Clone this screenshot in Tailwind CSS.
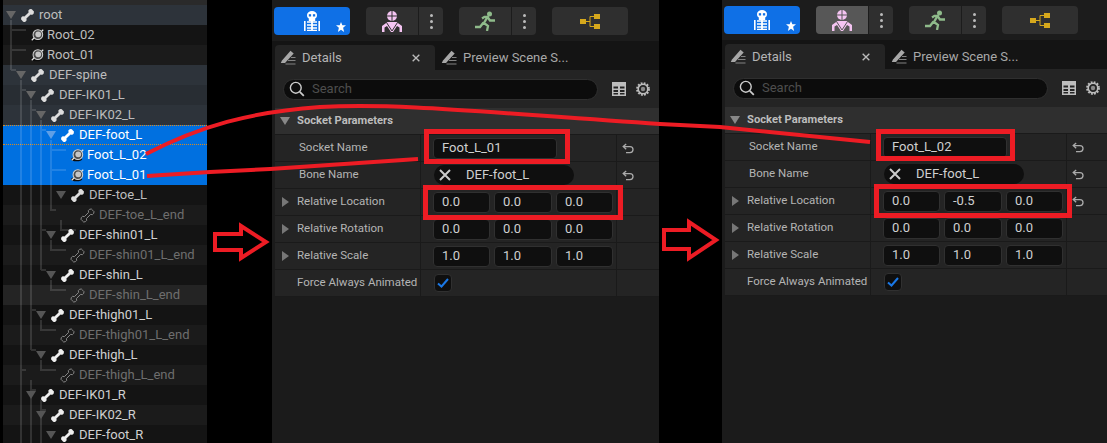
<!DOCTYPE html>
<html lang="en">
<head>
  <meta charset="UTF-8">
  <title>Socket details</title>
  <script src="https://cdn.jsdelivr.net/npm/@tailwindcss/browser@4"></script>
</head>
<body class="bg-black overflow-hidden">

<svg class="hidden">
  <symbol id="bone" viewBox="0 0 15 15">
    <path d="M8.600 4.400A2.300 2.300 0 0 1 12.700 2.300A2.300 2.300 0 0 1 10.600 6.400L6.400 10.600A2.300 2.300 0 0 1 2.300 12.700A2.300 2.300 0 0 1 4.400 8.600Z" fill="currentColor"/>
  </symbol>
  <symbol id="bone-leaf" viewBox="0 0 15 15">
    <path d="M8.600 4.400A2.300 2.300 0 0 1 12.700 2.300A2.300 2.300 0 0 1 10.600 6.400L6.400 10.600A2.300 2.300 0 0 1 2.300 12.700A2.300 2.300 0 0 1 4.400 8.600Z" fill="none" stroke="currentColor" stroke-width="1"/>
  </symbol>
  <symbol id="socket" viewBox="0 0 14 14">
    <ellipse cx="6" cy="11.500" rx="6" ry="2.300" fill="#0c0c0c"/>
    <path d="M.800 12.600 3.500 10M13.200 1.400 11 3.500" stroke="#e4e4e4" stroke-width="1.300"/>
    <circle cx="7.400" cy="6.600" r="5.200" fill="#4c4c4c" stroke="#d2d2d2" stroke-width="1.100"/>
    <circle cx="7.800" cy="6.300" r="3.100" fill="#c6c6c6"/>
  </symbol>
  <symbol id="down" viewBox="0 0 10 8"><path d="M0 0h10L5 8Z" fill="currentColor"/></symbol>
  <symbol id="undo" viewBox="0 0 12 11"><path d="M4.200 1 1.200 3.600l3 2.700M1.400 3.600H8a3 3 0 0 1 0 6H4" stroke="currentColor" stroke-width="1.300" fill="none"/></symbol>
  <symbol id="skeleton" viewBox="0 0 16 20">
    <path d="M3 4a5 4 0 0 1 10 0c0 2.200-1 3-1.800 3.600V10H4.800V7.600C4 7 3 6.200 3 4Z" fill="#fff"/>
    <rect x="4.800" y="3.200" width="2.300" height="2.300" fill="#0f70e6"/><rect x="8.900" y="3.200" width="2.300" height="2.300" fill="#0f70e6"/>
    <path d="M.800 10v10M15.200 10v10" stroke="#fff" stroke-width="1.600"/>
    <path d="M3 11h10M3 14h10M3 17h10M3 19.500h10" stroke="#fff" stroke-width="1.500"/><path d="M8 10v10" stroke="#fff" stroke-width="1.800"/>
  </symbol>
  <symbol id="star" viewBox="0 0 9 9"><path d="m4.500 0 1.200 3H9L6.400 5.200 7.300 9 4.500 6.900 1.700 9l.9-3.800L0 3h3.300Z" fill="#fff"/></symbol>
  <symbol id="mesh" viewBox="0 0 20 21">
    <circle cx="10" cy="5" r="5" fill="#f4c4f2"/><path d="M10 0v10M5 5h10" stroke="currentColor" stroke-width="1"/>
    <path d="M5.500 11h9l5.500 4v6h-2.500v-4.500L15 15l-4 6H9l-4-6-2.500 1.500V21H0v-6Z" fill="#f4c4f2"/>
    <path d="M4.500 11.500 10 20l5.500-8.500" stroke="currentColor" stroke-width="1" fill="none"/>
  </symbol>
  <symbol id="runner" viewBox="0 0 20 20">
    <circle cx="14.500" cy="3" r="2.500" fill="#8fbb8b"/>
    <path d="M0 16h5l3.500-4.500M7 7.500 9.500 5.800h3L9 12l4 3-1 5M12.500 6l2.500 3.500H20" stroke="#8fbb8b" stroke-width="2.300" fill="none"/>
  </symbol>
  <symbol id="blueprint" viewBox="0 0 20 15">
    <rect x="0" y="5" width="6" height="5" fill="#d6a81c"/><rect x="14" y="0" width="6" height="5" fill="#d6a81c"/><rect x="14" y="10" width="6" height="5" fill="#d6a81c"/>
    <path d="M6 7.500h4M10 2.500v10M10 2.500h4M10 12.500h4" stroke="#d6a81c" stroke-width="1" fill="none"/>
  </symbol>
  <symbol id="details" viewBox="0 0 16 15">
    <path d="M2 10.500 10.500.800l3.200 2.700L5 13H.800Z" fill="#a8a8a8"/>
    <path d="M8 10.500h7.500M5.500 14h10M11 7.500h4.500" stroke="#828282" stroke-width="1"/>
  </symbol>
  <symbol id="search" viewBox="0 0 16 16"><circle cx="6.800" cy="6.800" r="5.400" stroke="currentColor" stroke-width="1.400" fill="none"/><path d="m10.800 10.800 4 4" stroke="currentColor" stroke-width="1.800"/></symbol>
  <symbol id="table" viewBox="0 0 14 14"><path d="M0 0h14v14H0Z" fill="#bdbdbd"/><path d="M1.500 4.500h4.500v2h-4.500zM8 4.500h4.500v2H8zM1.500 8h4.500v2h-4.500zM8 8h4.500v2H8zM1.500 11h4.500v1.500h-4.500zM8 11h4.500v1.500H8z" fill="#242424"/></symbol>
  <symbol id="gear" viewBox="0 0 14 14"><circle cx="7" cy="7" r="4.800" fill="none" stroke="#bdbdbd" stroke-width="1.600"/><circle cx="7" cy="7" r="6" fill="none" stroke="#bdbdbd" stroke-width="1.800" stroke-dasharray="1.800 1.350"/><circle cx="7" cy="7" r="2.200" fill="#8a8a8a"/></symbol>
  <symbol id="cross" viewBox="0 0 12 12"><path d="m1 1 10 10M11 1 1 11" stroke="currentColor" stroke-width="2"/></symbol>
</svg>

<div class="flex h-[443px] w-[1107px] overflow-hidden font-['Roboto',sans-serif]">

  <!-- skeleton tree -->
  <div class="relative ml-[3px] w-[204px] shrink-0 pt-[5px] text-[13px] text-[#bdbdbd] bg-[#2a2a2a]">
    <div class="flex h-5 items-center pl-[3px] bg-[#2d333a]"><svg class="relative z-10 w-2.5 h-2 text-[#666] mr-1"><use href="#down"/></svg><svg class="relative z-10 w-[15px] h-[15px] mr-1 text-[#ddd]"><use href="#bone"/></svg><span>root</span></div>
    <div class="flex h-5 items-center pl-[28px] bg-[#141414]"><svg class="relative z-10 w-[13px] h-[14px] mr-[3px]"><use href="#socket"/></svg><span>Root_02</span></div>
    <div class="flex h-5 items-center pl-[28px] bg-[#1b1b1b]"><svg class="relative z-10 w-[13px] h-[14px] mr-[3px]"><use href="#socket"/></svg><span>Root_01</span></div>
    <div class="flex h-5 items-center pl-[13px] bg-[#2d333a]"><svg class="relative z-10 w-2.5 h-2 text-[#666] mr-1"><use href="#down"/></svg><svg class="relative z-10 w-[15px] h-[15px] mr-1 text-[#ddd]"><use href="#bone"/></svg><span>DEF-spine</span></div>
    <div class="flex h-5 items-center pl-[23px] bg-[#282d33]"><svg class="relative z-10 w-2.5 h-2 text-[#666] mr-1"><use href="#down"/></svg><svg class="relative z-10 w-[15px] h-[15px] mr-1 text-[#ddd]"><use href="#bone"/></svg><span>DEF-IK01_L</span></div>
    <div class="flex h-5 items-center pl-[33px] bg-[#2d333a]"><svg class="relative z-10 w-2.5 h-2 text-[#666] mr-1"><use href="#down"/></svg><svg class="relative z-10 w-[15px] h-[15px] mr-1 text-[#ddd]"><use href="#bone"/></svg><span>DEF-IK02_L</span></div>
    <div class="flex h-5 items-center pl-[43px] bg-[#0070e0] text-white border-y border-dotted border-y-[#d98a1e]"><svg class="relative z-10 w-2.5 h-2 text-[#5f9fe6] mr-1"><use href="#down"/></svg><svg class="relative z-10 w-[15px] h-[15px] mr-1"><use href="#bone"/></svg><span>DEF-foot_L</span></div>
    <div class="flex h-5 items-center pl-[68px] bg-[#0070e0] text-white"><svg class="relative z-10 w-[13px] h-[14px] mr-[3px]"><use href="#socket"/></svg><span>Foot_L_02</span></div>
    <div class="flex h-5 items-center pl-[68px] bg-[#0070e0] text-white"><svg class="relative z-10 w-[13px] h-[14px] mr-[3px]"><use href="#socket"/></svg><span>Foot_L_01</span></div>
    <div class="flex h-5 items-center pl-[53px] bg-[#141414]"><svg class="relative z-10 w-2.5 h-2 text-[#555] mr-1"><use href="#down"/></svg><svg class="relative z-10 w-[15px] h-[15px] mr-1 text-[#ddd]"><use href="#bone"/></svg><span>DEF-toe_L</span></div>
    <div class="flex h-5 items-center pl-[77px] bg-[#1b1b1b] text-[#6e6e6e]"><svg class="relative z-10 w-[15px] h-[15px] mr-1 text-[#888]"><use href="#bone-leaf"/></svg><span>DEF-toe_L_end</span></div>
    <div class="flex h-5 items-center pl-[43px] bg-[#141414] text-[#d0d0d0]"><svg class="relative z-10 w-2.5 h-2 text-[#555] mr-1"><use href="#down"/></svg><svg class="relative z-10 w-[15px] h-[15px] mr-1 text-[#eee]"><use href="#bone"/></svg><span>DEF-shin01_L</span></div>
    <div class="flex h-5 items-center pl-[67px] bg-[#1b1b1b] text-[#6e6e6e]"><svg class="relative z-10 w-[15px] h-[15px] mr-1 text-[#888]"><use href="#bone-leaf"/></svg><span>DEF-shin01_L_end</span></div>
    <div class="flex h-5 items-center pl-[43px] bg-[#141414] text-[#d0d0d0]"><svg class="relative z-10 w-2.5 h-2 text-[#555] mr-1"><use href="#down"/></svg><svg class="relative z-10 w-[15px] h-[15px] mr-1 text-[#eee]"><use href="#bone"/></svg><span>DEF-shin_L</span></div>
    <div class="flex h-5 items-center pl-[67px] bg-[#242424] text-[#6e6e6e]"><svg class="relative z-10 w-[15px] h-[15px] mr-1 text-[#888]"><use href="#bone-leaf"/></svg><span>DEF-shin_L_end</span></div>
    <div class="flex h-5 items-center pl-[33px] bg-[#141414] text-[#d0d0d0]"><svg class="relative z-10 w-2.5 h-2 text-[#555] mr-1"><use href="#down"/></svg><svg class="relative z-10 w-[15px] h-[15px] mr-1 text-[#eee]"><use href="#bone"/></svg><span>DEF-thigh01_L</span></div>
    <div class="flex h-5 items-center pl-[57px] bg-[#1b1b1b] text-[#6e6e6e]"><svg class="relative z-10 w-[15px] h-[15px] mr-1 text-[#888]"><use href="#bone-leaf"/></svg><span>DEF-thigh01_L_end</span></div>
    <div class="flex h-5 items-center pl-[33px] bg-[#141414] text-[#d0d0d0]"><svg class="relative z-10 w-2.5 h-2 text-[#555] mr-1"><use href="#down"/></svg><svg class="relative z-10 w-[15px] h-[15px] mr-1 text-[#eee]"><use href="#bone"/></svg><span>DEF-thigh_L</span></div>
    <div class="flex h-5 items-center pl-[57px] bg-[#1b1b1b] text-[#6e6e6e]"><svg class="relative z-10 w-[15px] h-[15px] mr-1 text-[#888]"><use href="#bone-leaf"/></svg><span>DEF-thigh_L_end</span></div>
    <div class="flex h-5 items-center pl-[23px] bg-[#141414] text-[#d0d0d0]"><svg class="relative z-10 w-2.5 h-2 text-[#555] mr-1"><use href="#down"/></svg><svg class="relative z-10 w-[15px] h-[15px] mr-1 text-[#eee]"><use href="#bone"/></svg><span>DEF-IK01_R</span></div>
    <div class="flex h-5 items-center pl-[33px] bg-[#1b1b1b] text-[#d0d0d0]"><svg class="relative z-10 w-2.5 h-2 text-[#555] mr-1"><use href="#down"/></svg><svg class="relative z-10 w-[15px] h-[15px] mr-1 text-[#eee]"><use href="#bone"/></svg><span>DEF-IK02_R</span></div>
    <div class="flex h-5 items-center pl-[43px] bg-[#141414] text-[#d0d0d0]"><svg class="relative z-10 w-2.5 h-2 text-[#555] mr-1"><use href="#down"/></svg><svg class="relative z-10 w-[15px] h-[15px] mr-1 text-[#eee]"><use href="#bone"/></svg><span>DEF-foot_R</span></div>

    <!-- guide lines sit over the row backgrounds -->
    <svg class="absolute left-0 top-0 w-[204px] h-[443px]" fill="none" stroke="#fff" stroke-opacity="0.13" stroke-width="2">
      <path d="M8 20V70M8 30H23M8 50H23M8 70H13"/>
      <path d="M18 80V443M18 90H23M18 370H23"/>
      <path d="M28 100V350M28 110H33M28 310H33M28 350H33M28 380V443M28 390H33"/>
      <path d="M38 120V270M38 130H43M38 230H43M38 270H43M38 320V330H53M38 360V370H53M38 400V443M38 410H43"/>
      <path d="M48 140V210H53M48 150H63M48 170H63M48 240V250H63M48 280V290H63"/>
      <path d="M58 220V230H73"/>
    </svg>
  </div>

  <!-- details panel, first socket -->
  <div class="ml-[65px] w-[387px] shrink-0 bg-[#1b1b1b] text-[11.5px] text-[#b4b4b4]">
    <div class="flex h-[41px] items-center pl-[2px] pt-px gap-4 bg-[#1c1c1c]">
      <div class="relative flex h-7 w-[76px] items-center justify-center rounded bg-[#0f70e6]"><svg class="w-4 h-5"><use href="#skeleton"/></svg><svg class="absolute right-1 bottom-[3px] size-[10px]"><use href="#star"/></svg></div>
      <div class="flex h-7 w-[77px] rounded bg-[#2f2f2f]"><div class="flex w-[52px] items-center justify-center"><svg class="w-5 h-[21px] text-[#2f2f2f]"><use href="#mesh"/></svg></div><div class="flex flex-1 flex-col items-center justify-center gap-[3px] border-l border-[#1c1c1c]"><i class="size-[3px] rounded-full bg-[#bbb]"></i><i class="size-[3px] rounded-full bg-[#bbb]"></i><i class="size-[3px] rounded-full bg-[#bbb]"></i></div></div>
      <div class="flex h-7 w-[77px] rounded bg-[#2f2f2f]"><div class="flex w-[52px] items-center justify-center"><svg class="w-5 h-5"><use href="#runner"/></svg></div><div class="flex flex-1 flex-col items-center justify-center gap-[3px] border-l border-[#1c1c1c]"><i class="size-[3px] rounded-full bg-[#bbb]"></i><i class="size-[3px] rounded-full bg-[#bbb]"></i><i class="size-[3px] rounded-full bg-[#bbb]"></i></div></div>
      <div class="flex h-7 w-[76px] items-center justify-center rounded bg-[#2f2f2f]"><svg class="w-5 h-[15px]"><use href="#blueprint"/></svg></div>
    </div>
    <div class="flex h-[29px] items-end pl-[3px] bg-[#141414] text-[13px]">
      <div class="flex h-[25px] w-[160px] items-center pl-[5px] rounded-t bg-[#242424]"><svg class="w-4 h-[15px] mr-[6px]"><use href="#details"/></svg><span>Details</span><svg class="w-2 h-2 ml-auto mr-[15px] text-[#bbb]"><use href="#cross"/></svg></div>
      <div class="flex h-[25px] items-center pl-[6px]"><svg class="w-4 h-[15px] mr-[6px]"><use href="#details"/></svg><span class="text-[#a8a8a8]">Preview Scene S...</span></div>
    </div>
    <div class="ml-[3px] bg-[#242424]">
      <div class="flex h-[38px] items-center pl-2">
        <div class="flex h-[21px] w-[315px] items-center rounded-full border border-[#2f2f2f] bg-[#0c0c0c] pl-[5px] text-[#4e4e4e] text-[13px]"><svg class="w-4 h-4 mr-[7px] text-[#ccc]"><use href="#search"/></svg><span>Search</span></div>
        <svg class="w-[14px] h-[14px] ml-[14px]"><use href="#table"/></svg>
        <svg class="w-[14px] h-[14px] ml-[10px]"><use href="#gear"/></svg>
      </div>
      <div class="flex h-[26px] items-center pl-[5px] bg-[#2f2f2f] font-bold text-[11.2px] text-[#bdbdbd]"><svg class="w-2.5 h-2 mr-[7px] text-[#888]"><use href="#down"/></svg><span>Socket Parameters</span></div>
    </div>
    <div class="ml-[3px] grid grid-cols-[145px_197px_1fr] auto-rows-[27px] whitespace-nowrap bg-[#242424] border-b border-[#1a1a1a] [&>div]:border-t [&>div]:border-[#1a1a1a] [&>div:nth-child(3n+2)]:border-x">
      <div class="flex items-center pl-[24px]">Socket Name</div>
      <div class="flex items-center pl-[12px]"><div class="flex h-[21px] w-[124px] items-center rounded border border-[#303030] bg-[#0f0f0f] pl-2 text-[13px] text-[#d0d0d0]">Foot_L_01</div></div>
      <div class="flex items-center pl-[4px] pt-px"><svg class="w-3 h-[11px] ml-[1px] text-[#aaa]"><use href="#undo"/></svg></div>
      <div class="flex items-center pl-[24px]">Bone Name</div>
      <div class="flex items-center pl-[13px]"><div class="flex h-5 w-[140px] items-center rounded-full bg-[#0f0f0f] pl-[5px] text-[13px] text-[#d0d0d0]"><svg class="w-3 h-3 mr-[15px] text-[#ccc]"><use href="#cross"/></svg>DEF-foot_L</div></div>
      <div class="flex items-center pl-[4px] pt-px"><svg class="w-3 h-[11px] ml-[1px] text-[#aaa]"><use href="#undo"/></svg></div>
      <div class="flex items-center pl-[7px]"><svg class="w-[7px] h-[10px] mr-[8px] text-[#777]" viewBox="0 0 7 10"><path d="M0 0 7 5 0 10Z" fill="currentColor"/></svg>Relative Location</div>
      <div class="flex items-center gap-1 pl-[12px] text-[13px] text-[#d0d0d0]"><div class="flex h-[21px] w-[57px] items-center rounded border border-[#303030] bg-[#0f0f0f] pl-2">0.0</div><div class="flex h-[21px] w-[58px] items-center rounded border border-[#303030] bg-[#0f0f0f] pl-2">0.0</div><div class="flex h-[21px] w-[57px] items-center rounded border border-[#303030] bg-[#0f0f0f] pl-2">0.0</div></div>
      <div></div>
      <div class="flex items-center pl-[7px]"><svg class="w-[7px] h-[10px] mr-[8px] text-[#777]" viewBox="0 0 7 10"><path d="M0 0 7 5 0 10Z" fill="currentColor"/></svg>Relative Rotation</div>
      <div class="flex items-center gap-1 pl-[12px] text-[13px] text-[#d0d0d0]"><div class="flex h-[21px] w-[57px] items-center rounded border border-[#303030] bg-[#0f0f0f] pl-2">0.0</div><div class="flex h-[21px] w-[58px] items-center rounded border border-[#303030] bg-[#0f0f0f] pl-2">0.0</div><div class="flex h-[21px] w-[57px] items-center rounded border border-[#303030] bg-[#0f0f0f] pl-2">0.0</div></div>
      <div></div>
      <div class="flex items-center pl-[7px]"><svg class="w-[7px] h-[10px] mr-[8px] text-[#777]" viewBox="0 0 7 10"><path d="M0 0 7 5 0 10Z" fill="currentColor"/></svg>Relative Scale</div>
      <div class="flex items-center gap-1 pl-[12px] text-[13px] text-[#d0d0d0]"><div class="flex h-[21px] w-[57px] items-center rounded border border-[#303030] bg-[#0f0f0f] pl-2">1.0</div><div class="flex h-[21px] w-[58px] items-center rounded border border-[#303030] bg-[#0f0f0f] pl-2">1.0</div><div class="flex h-[21px] w-[57px] items-center rounded border border-[#303030] bg-[#0f0f0f] pl-2">1.0</div></div>
      <div></div>
      <div class="flex items-center pl-[22px]">Force Always Animated</div>
      <div class="flex items-center pl-[13px]"><div class="flex size-[18px] items-center justify-center rounded border border-[#303030] bg-[#0f0f0f]"><svg class="w-3 h-[10px]" viewBox="0 0 12 10"><path d="m1 5.500 3.500 3L11 1" stroke="#1a78e6" stroke-width="2" fill="none"/></svg></div></div>
      <div></div>
    </div>
  </div>

  <!-- details panel, second socket -->
  <div class="ml-[63px] w-[385px] shrink-0 -mt-px bg-[#1b1b1b] text-[11.5px] text-[#b4b4b4]">
    <div class="flex h-[41px] items-center pl-[2px] pt-px gap-4 bg-[#1c1c1c]">
      <div class="relative flex h-7 w-[76px] items-center justify-center rounded bg-[#0f70e6]"><svg class="w-4 h-5"><use href="#skeleton"/></svg><svg class="absolute right-1 bottom-[3px] size-[10px]"><use href="#star"/></svg></div>
      <div class="flex h-7 w-[77px] rounded bg-[#2f2f2f]"><div class="flex w-[52px] items-center justify-center rounded-l bg-[#575757]"><svg class="w-5 h-[21px] text-[#575757]"><use href="#mesh"/></svg></div><div class="flex flex-1 flex-col items-center justify-center gap-[3px] border-l border-[#1c1c1c]"><i class="size-[3px] rounded-full bg-[#bbb]"></i><i class="size-[3px] rounded-full bg-[#bbb]"></i><i class="size-[3px] rounded-full bg-[#bbb]"></i></div></div>
      <div class="flex h-7 w-[77px] rounded bg-[#2f2f2f]"><div class="flex w-[52px] items-center justify-center"><svg class="w-5 h-5"><use href="#runner"/></svg></div><div class="flex flex-1 flex-col items-center justify-center gap-[3px] border-l border-[#1c1c1c]"><i class="size-[3px] rounded-full bg-[#bbb]"></i><i class="size-[3px] rounded-full bg-[#bbb]"></i><i class="size-[3px] rounded-full bg-[#bbb]"></i></div></div>
      <div class="flex h-7 w-[76px] items-center justify-center rounded bg-[#2f2f2f]"><svg class="w-5 h-[15px]"><use href="#blueprint"/></svg></div>
    </div>
    <div class="flex h-[29px] items-end pl-[3px] bg-[#141414] text-[13px]">
      <div class="flex h-[25px] w-[160px] items-center pl-[5px] rounded-t bg-[#242424]"><svg class="w-4 h-[15px] mr-[6px]"><use href="#details"/></svg><span>Details</span><svg class="w-2 h-2 ml-auto mr-[15px] text-[#bbb]"><use href="#cross"/></svg></div>
      <div class="flex h-[25px] items-center pl-[6px]"><svg class="w-4 h-[15px] mr-[6px]"><use href="#details"/></svg><span class="text-[#a8a8a8]">Preview Scene S...</span></div>
    </div>
    <div class="ml-[3px] bg-[#242424]">
      <div class="flex h-[38px] items-center pl-2">
        <div class="flex h-[21px] w-[315px] items-center rounded-full border border-[#2f2f2f] bg-[#0c0c0c] pl-[5px] text-[#4e4e4e] text-[13px]"><svg class="w-4 h-4 mr-[7px] text-[#ccc]"><use href="#search"/></svg><span>Search</span></div>
        <svg class="w-[14px] h-[14px] ml-[14px]"><use href="#table"/></svg>
        <svg class="w-[14px] h-[14px] ml-[10px]"><use href="#gear"/></svg>
      </div>
      <div class="flex h-[26px] items-center pl-[5px] bg-[#2f2f2f] font-bold text-[11.2px] text-[#bdbdbd]"><svg class="w-2.5 h-2 mr-[7px] text-[#888]"><use href="#down"/></svg><span>Socket Parameters</span></div>
    </div>
    <div class="ml-[3px] grid grid-cols-[145px_197px_1fr] auto-rows-[27px] whitespace-nowrap bg-[#242424] border-b border-[#1a1a1a] [&>div]:border-t [&>div]:border-[#1a1a1a] [&>div:nth-child(3n+2)]:border-x">
      <div class="flex items-center pl-[24px]">Socket Name</div>
      <div class="flex items-center pl-[12px]"><div class="flex h-[21px] w-[124px] items-center rounded border border-[#303030] bg-[#0f0f0f] pl-2 text-[13px] text-[#d0d0d0]">Foot_L_02</div></div>
      <div class="flex items-center pl-[4px] pt-px"><svg class="w-3 h-[11px] ml-[1px] text-[#aaa]"><use href="#undo"/></svg></div>
      <div class="flex items-center pl-[24px]">Bone Name</div>
      <div class="flex items-center pl-[13px]"><div class="flex h-5 w-[140px] items-center rounded-full bg-[#0f0f0f] pl-[5px] text-[13px] text-[#d0d0d0]"><svg class="w-3 h-3 mr-[15px] text-[#ccc]"><use href="#cross"/></svg>DEF-foot_L</div></div>
      <div class="flex items-center pl-[4px] pt-px"><svg class="w-3 h-[11px] ml-[1px] text-[#aaa]"><use href="#undo"/></svg></div>
      <div class="flex items-center pl-[7px]"><svg class="w-[7px] h-[10px] mr-[8px] text-[#777]" viewBox="0 0 7 10"><path d="M0 0 7 5 0 10Z" fill="currentColor"/></svg>Relative Location</div>
      <div class="flex items-center gap-1 pl-[12px] text-[13px] text-[#d0d0d0]"><div class="flex h-[21px] w-[57px] items-center rounded border border-[#303030] bg-[#0f0f0f] pl-2">0.0</div><div class="flex h-[21px] w-[58px] items-center rounded border border-[#303030] bg-[#0f0f0f] pl-2">-0.5</div><div class="flex h-[21px] w-[57px] items-center rounded border border-[#303030] bg-[#0f0f0f] pl-2">0.0</div></div>
      <div class="flex items-center pl-[4px] pt-px"><svg class="w-3 h-[11px] ml-[1px] text-[#aaa]"><use href="#undo"/></svg></div>
      <div class="flex items-center pl-[7px]"><svg class="w-[7px] h-[10px] mr-[8px] text-[#777]" viewBox="0 0 7 10"><path d="M0 0 7 5 0 10Z" fill="currentColor"/></svg>Relative Rotation</div>
      <div class="flex items-center gap-1 pl-[12px] text-[13px] text-[#d0d0d0]"><div class="flex h-[21px] w-[57px] items-center rounded border border-[#303030] bg-[#0f0f0f] pl-2">0.0</div><div class="flex h-[21px] w-[58px] items-center rounded border border-[#303030] bg-[#0f0f0f] pl-2">0.0</div><div class="flex h-[21px] w-[57px] items-center rounded border border-[#303030] bg-[#0f0f0f] pl-2">0.0</div></div>
      <div></div>
      <div class="flex items-center pl-[7px]"><svg class="w-[7px] h-[10px] mr-[8px] text-[#777]" viewBox="0 0 7 10"><path d="M0 0 7 5 0 10Z" fill="currentColor"/></svg>Relative Scale</div>
      <div class="flex items-center gap-1 pl-[12px] text-[13px] text-[#d0d0d0]"><div class="flex h-[21px] w-[57px] items-center rounded border border-[#303030] bg-[#0f0f0f] pl-2">1.0</div><div class="flex h-[21px] w-[58px] items-center rounded border border-[#303030] bg-[#0f0f0f] pl-2">1.0</div><div class="flex h-[21px] w-[57px] items-center rounded border border-[#303030] bg-[#0f0f0f] pl-2">1.0</div></div>
      <div></div>
      <div class="flex items-center pl-[22px]">Force Always Animated</div>
      <div class="flex items-center pl-[13px]"><div class="flex size-[18px] items-center justify-center rounded border border-[#303030] bg-[#0f0f0f]"><svg class="w-3 h-[10px]" viewBox="0 0 12 10"><path d="m1 5.500 3.500 3L11 1" stroke="#1a78e6" stroke-width="2" fill="none"/></svg></div></div>
      <div></div>
    </div>
  </div>
</div>

<!-- red annotations drawn over the screenshot -->
<svg class="absolute left-0 top-0 w-[1107px] h-[443px] pointer-events-none z-20" fill="none" stroke="#ed1c24" stroke-width="4">
  <path d="M146 154C200 126 250 112 320 107 C400 103 480 112 660 124 L720 127 870 142"/>
  <path d="M147 176 L210 172 270 169 418 159"/>
  <g stroke-width="5">
    <rect x="426.500" y="131.500" width="141" height="30"/>
    <rect x="425.500" y="187.500" width="195" height="30"/>
    <rect x="878.500" y="131.500" width="134" height="27"/>
    <rect x="876.500" y="186.500" width="193" height="29"/>
  </g>
  <path d="M215 234H241V226L266 242 241 258V250H215Z"/>
  <path d="M664 230H689V222L716 240 689 258V249H664Z"/>
</svg>
</body>
</html>
